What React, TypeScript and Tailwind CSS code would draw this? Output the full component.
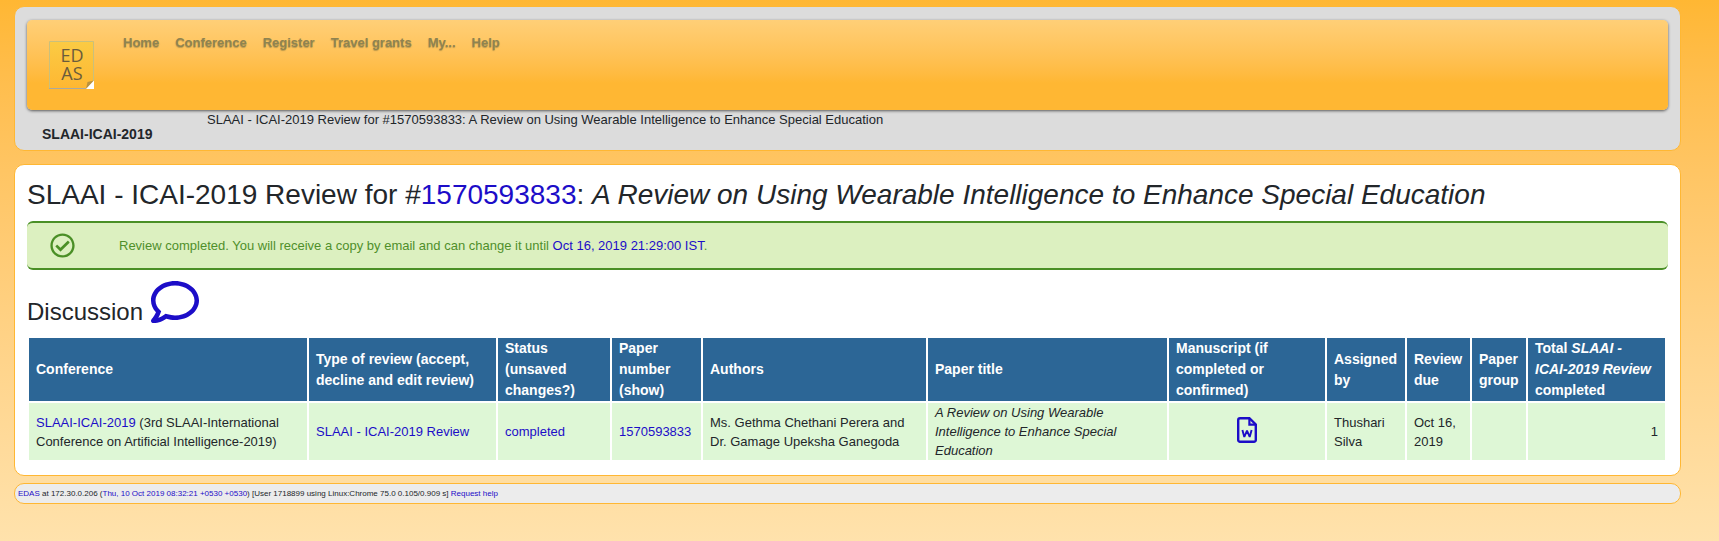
import { ReactNode } from "react";
import { FaRegCheckCircle, FaRegComment } from "react-icons/fa";

const navItems = ["Home", "Conference", "Register", "Travel grants", "My...", "Help"];

function TextLink({ children }: { children: ReactNode }) {
  return (
    <a href="#" className="text-[#1c0dc8]">
      {children}
    </a>
  );
}

function Logo() {
  return (
    <svg viewBox="0 0 45 48" className="h-12 w-[45px]" role="img" aria-label="EDAS">
      <defs>
        <linearGradient id="note" x1="0" y1="0" x2="0" y2="1">
          <stop offset="0" stopColor="#fbcb44" />
          <stop offset="1" stopColor="#feb732" />
        </linearGradient>
      </defs>
      <path d="M.5 .5H44.5V40L37 47.5H.5Z" fill="url(#note)" stroke="#c9c07c" />
      <path d="M0 47.5H37" stroke="#a9a9a0" />
      <path d="M37 48L38.5 41L45 39.5Z" fill="#b8913f" />
      <path d="M37 48L45 39.5V48Z" fill="#fff" />
      <g fill="#6b5c3c" fontFamily="'Open Sans', sans-serif" fontSize="18" textAnchor="middle">
        <text x="23" y="21">ED</text>
        <text x="23" y="39">AS</text>
      </g>
    </svg>
  );
}

function WordFileIcon() {
  return (
    <svg viewBox="0 0 20 26" className="h-[26px] w-5" fill="none" stroke="currentColor" aria-hidden="true">
      <path
        d="M3 1.2H12.4L18.8 7.4V23A1.8 1.8 0 0 1 17 24.8H3A1.8 1.8 0 0 1 1.2 23V3A1.8 1.8 0 0 1 3 1.2Z"
        strokeWidth="2.4"
      />
      <path d="M12.4 1.2V7.6H18.8" strokeWidth="2.2" />
      <path d="M5.4 13L7.3 20L10 13.6L12.7 20L14.6 13" strokeWidth="1.9" strokeLinejoin="bevel" />
    </svg>
  );
}

const headings: { label: ReactNode; width: string }[] = [
  { label: "Conference", width: "w-[278px]" },
  { label: "Type of review (accept, decline and edit review)", width: "w-[187px]" },
  { label: "Status (unsaved changes?)", width: "w-[112px]" },
  { label: "Paper number (show)", width: "w-[89px]" },
  { label: "Authors", width: "w-[223px]" },
  { label: "Paper title", width: "w-[239px]" },
  { label: "Manuscript (if completed or confirmed)", width: "w-[156px]" },
  { label: "Assigned by", width: "w-[78px]" },
  { label: "Review due", width: "w-[63px]" },
  { label: "Paper group", width: "w-[54px]" },
  {
    label: (
      <>
        Total <em>SLAAI - ICAI-2019 Review</em> completed
      </>
    ),
    width: "w-[137px]",
  },
];

export default function App() {
  return (
    <div className="min-h-screen bg-linear-to-b from-[#ffb733] to-[#ffe2ac] pt-1.5 pl-3.5 font-['Liberation_Sans',Arial,sans-serif] text-[13px] leading-[19px] text-[#22262a]">
      <div className="w-[98%] max-w-[1667px]">
        <header className="rounded-[10px] border border-[#ffb733] bg-[#dcdcdc] px-3 pt-[13px] pb-1.5">
          <nav
            aria-label="Main"
            className="flex h-[90px] items-start rounded-[5px] bg-linear-to-b from-[#ffcf77] to-[#ffb733] to-70% pt-[13px] pl-[22px] shadow-[0_1px_3px_rgba(0,0,0,0.6)]"
          >
            <a href="#" className="pt-2">
              <Logo />
            </a>
            <ul className="flex gap-4 pl-[29px] font-bold text-[#8f8350] [text-shadow:0_1px_1px_rgba(120,110,60,0.5)]">
              {navItems.map((item) => (
                <li key={item}>
                  <a href="#">{item}</a>
                </li>
              ))}
            </ul>
          </nav>
          <div className="flex items-start pl-[15px]">
            <p className="w-[165px] pt-3.5 text-sm leading-5 font-bold">SLAAI-ICAI-2019</p>
            <p>SLAAI - ICAI-2019 Review for #1570593833: A Review on Using Wearable Intelligence to Enhance Special Education</p>
          </div>
        </header>

        <main className="mt-[13px] rounded-[10px] border border-[#ffb733] bg-white px-3 pt-2.5 pb-[13px]">
          <h1 className="text-[28px] leading-10">
            SLAAI - ICAI-2019 Review for #<TextLink>1570593833</TextLink>:{" "}
            <em>A Review on Using Wearable Intelligence to Enhance Special Education</em>
          </h1>

          <div
            role="status"
            className="mt-1.5 flex h-[49px] items-center rounded-[6px] border-y-2 border-[#4a8f26] bg-[#dcf0c0] pl-[23px] text-[#4f8f2b]"
          >
            <FaRegCheckCircle className="size-[25px] text-[#4a8f26]" />
            <p className="pl-11">
              Review completed. You will receive a copy by email and can change it until{" "}
              <TextLink>Oct 16, 2019 21:29:00 IST</TextLink>.
            </p>
          </div>

          <h2 className="mt-2 flex items-end gap-2 text-2xl leading-7">
            Discussion
            <a href="#" aria-label="Open discussion" className="text-[#1c0dc8]">
              <FaRegComment className="size-12" />
            </a>
          </h2>

          <div className="mt-2.5 pr-px">
            <table className="w-full table-fixed border-separate border-spacing-0.5">
              <thead>
                <tr className="h-[63px] bg-[#2c6696] text-left text-sm leading-[21px] text-white">
                  {headings.map(({ label, width }, i) => (
                    <th key={i} scope="col" className={`${width} px-[7px]`}>
                      {label}
                    </th>
                  ))}
                </tr>
              </thead>
              <tbody>
                <tr className="bg-[#def7d6]">
                  <td className="px-[7px]">
                    <TextLink>SLAAI-ICAI-2019</TextLink> (3rd SLAAI-International Conference on Artificial Intelligence-2019)
                  </td>
                  <td className="px-[7px]">
                    <TextLink>SLAAI - ICAI-2019 Review</TextLink>
                  </td>
                  <td className="px-[7px]">
                    <TextLink>completed</TextLink>
                  </td>
                  <td className="px-[7px]">
                    <TextLink>1570593833</TextLink>
                  </td>
                  <td className="px-[7px]">Ms. Gethma Chethani Perera and Dr. Gamage Upeksha Ganegoda</td>
                  <td className="px-[7px] italic">A Review on Using Wearable Intelligence to Enhance Special Education</td>
                  <td className="px-[7px]">
                    <a href="#" aria-label="Manuscript" className="flex justify-center pb-1 text-[#1c0dc8]">
                      <WordFileIcon />
                    </a>
                  </td>
                  <td className="px-[7px]">Thushari Silva</td>
                  <td className="px-[7px]">Oct 16, 2019</td>
                  <td className="px-[7px]" />
                  <td className="px-[7px] text-right">1</td>
                </tr>
              </tbody>
            </table>
          </div>
        </main>

        <footer className="mt-[7px] rounded-[10px] border border-[#ffb733] bg-[#ececec] px-[3px] text-[8px] leading-[19px]">
          <TextLink>EDAS</TextLink> at 172.30.0.206 (<TextLink>Thu, 10 Oct 2019 08:32:21 +0530 +0530</TextLink>) [User 1718899 using
          Linux:Chrome 75.0 0.105/0.909 s] <TextLink>Request help</TextLink>
        </footer>
      </div>
    </div>
  );
}
